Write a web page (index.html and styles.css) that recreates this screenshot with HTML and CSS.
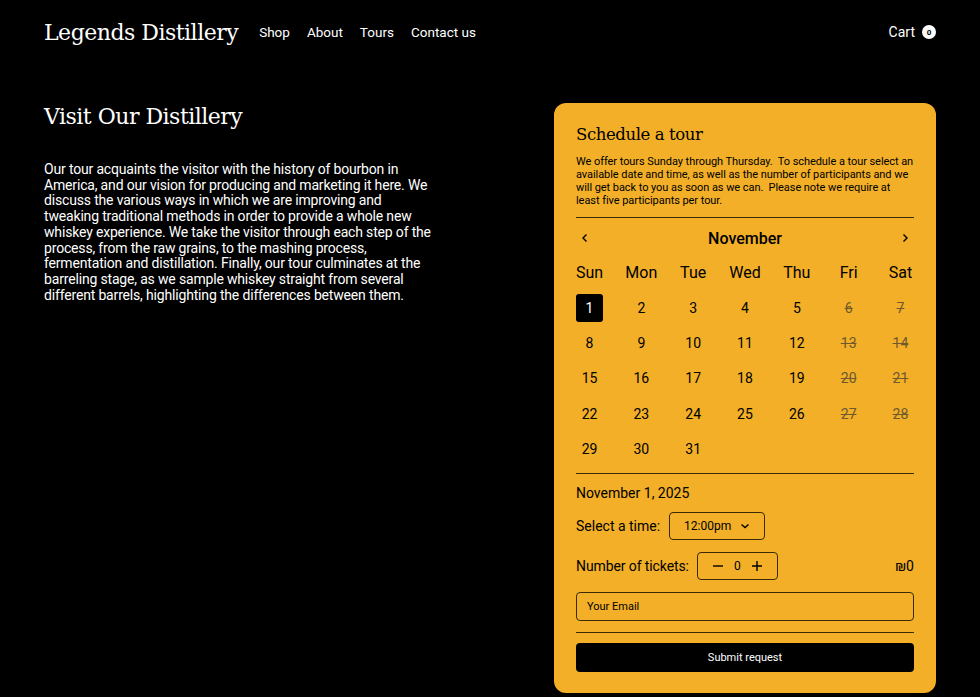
FILE: index.html
```html
<!DOCTYPE html>
<html>
  <head>
    <title>Legends Distillery - Tours</title>
    <link rel="stylesheet" href="styles.css">
  </head>
  <body>
    <header class="site-header">
      <div class="logo">Legends Distillery</div>
      <nav class="main-nav">
        <a href="#">Shop</a>
        <a href="#">About</a>
        <a href="#">Tours</a>
        <a href="#">Contact us</a>
      </nav>
      <a class="cart" href="#">Cart <span class="cart-count">0</span></a>
    </header>

    <main class="page">
      <section class="intro">
        <h1>Visit Our Distillery</h1>
        <p>Our tour acquaints the visitor with the history of bourbon in America, and our vision for producing and marketing it here. We discuss the various ways in which we are improving and tweaking traditional methods in order to provide a whole new whiskey experience. We take the visitor through each step of the process, from the raw grains, to the mashing process, fermentation and distillation. Finally, our tour culminates at the barreling stage, as we sample whiskey straight from several different barrels, highlighting the differences between them.</p>
      </section>

      <section class="booking">
        <h2>Schedule a tour</h2>
        <p class="booking-info">We offer tours Sunday through Thursday.&nbsp; To schedule a tour select an available date and time, as well as the number of participants and we will get back to you as soon as we can.&nbsp; Please note we require at least five participants per tour.</p>
        <hr>

        <div class="cal-head">
          <button class="cal-arrow">
            <svg width="10" height="10" viewBox="0 0 10 10"><path d="M6.5 1.5 3 5l3.5 3.5" fill="none" stroke="#000" stroke-width="1.4"/></svg>
          </button>
          <span class="cal-month">November</span>
          <button class="cal-arrow">
            <svg width="10" height="10" viewBox="0 0 10 10"><path d="M3.5 1.5 7 5 3.5 8.5" fill="none" stroke="#000" stroke-width="1.4"/></svg>
          </button>
        </div>

        <div class="cal-row cal-days">
          <span>Sun</span><span>Mon</span><span>Tue</span><span>Wed</span><span>Thu</span><span>Fri</span><span>Sat</span>
        </div>
        <div class="cal-row">
          <span class="day selected">1</span><span class="day">2</span><span class="day">3</span><span class="day">4</span><span class="day">5</span><span class="day off">6</span><span class="day off">7</span>
        </div>
        <div class="cal-row">
          <span class="day">8</span><span class="day">9</span><span class="day">10</span><span class="day">11</span><span class="day">12</span><span class="day off">13</span><span class="day off">14</span>
        </div>
        <div class="cal-row">
          <span class="day">15</span><span class="day">16</span><span class="day">17</span><span class="day">18</span><span class="day">19</span><span class="day off">20</span><span class="day off">21</span>
        </div>
        <div class="cal-row">
          <span class="day">22</span><span class="day">23</span><span class="day">24</span><span class="day">25</span><span class="day">26</span><span class="day off">27</span><span class="day off">28</span>
        </div>
        <div class="cal-row">
          <span class="day">29</span><span class="day">30</span><span class="day">31</span><span class="day empty"></span><span class="day empty"></span><span class="day empty"></span><span class="day empty"></span>
        </div>
        <hr class="cal-end">

        <div class="picked-date">November 1, 2025</div>

        <div class="field-row">
          <label>Select a time:</label>
          <div class="time-select">12:00pm
            <svg width="10" height="10" viewBox="0 0 10 10"><path d="M1.5 3.5 5 6.5l3.5-3" fill="none" stroke="#000" stroke-width="1.4"/></svg>
          </div>
        </div>

        <div class="field-row">
          <label class="tickets-label">Number of tickets:</label>
          <div class="ticket-count">
            <svg width="12" height="12" viewBox="0 0 12 12"><path d="M1 6h10" stroke="#000" stroke-width="1.4"/></svg>
            <span>0</span>
            <svg width="12" height="12" viewBox="0 0 12 12"><path d="M1 6h10M6 1v10" stroke="#000" stroke-width="1.4"/></svg>
          </div>
          <span class="price">₪0</span>
        </div>

        <input class="email" type="text" placeholder="Your Email">
        <hr class="form-end">
        <button class="submit">Submit request</button>
      </section>
    </main>
  </body>
</html>
```

FILE: styles.css
```css
body{
  margin:0;
  background:#000;
  color:#fff;
  font-family:Roboto, "Liberation Sans", sans-serif;
}
a{
  color:#fff;
  text-decoration:none;
}

/* header */
.site-header{
  display:flex;
  align-items:center;
  height:64px;
  padding:0 44px;
}
.logo{
  font-family:"DejaVu Serif", serif;
  font-size:22px;
  letter-spacing:-0.5px;
  margin-right:21px;
}
.main-nav{
  display:flex;
  gap:17px;
  font-size:13.5px;
}
.cart{
  margin-left:auto;
  display:flex;
  align-items:center;
  font-size:14px;
}
.cart-count{
  display:inline-flex;
  align-items:center;
  justify-content:center;
  width:14px;
  height:14px;
  margin-left:7px;
  border-radius:50%;
  background:#fff;
  color:#000;
  font-size:8px;
  font-weight:700;
}

/* page */
.page{
  display:flex;
  justify-content:space-between;
  align-items:flex-start;
  padding:39px 44px 0;
}
.intro{
  width:390px;
}
.intro h1{
  font-family:"DejaVu Serif", serif;
  font-weight:400;
  font-size:22px;
  letter-spacing:-0.5px;
  line-height:28px;
  margin:0 0 31px;
}
.intro p{
  margin:0;
  font-size:14px;
  letter-spacing:-0.17px;
  line-height:15.7px;
}

/* booking card */
.booking{
  width:338px;
  padding:20px 22px 21px;
  background:#f2af27;
  color:#000;
  border-radius:12px;
}
.booking h2{
  font-family:"DejaVu Serif", serif;
  font-weight:400;
  font-size:16.5px;
  letter-spacing:-0.4px;
  line-height:24px;
  margin:0 0 8px;
}
.booking-info{
  font-size:11px;
  letter-spacing:-0.06px;
  line-height:13px;
  margin:0;
}
.booking hr{
  border:none;
  border-top:1px solid #3a2a08;
  margin:10px 0;
}
.cal-head{
  display:flex;
  align-items:center;
  justify-content:space-between;
  height:20px;
}
.cal-arrow{
  background:none;
  border:none;
  padding:0 4px;
  display:flex;
}
.cal-month{
  font-size:16px;
  font-weight:500;
}
.cal-row{
  display:flex;
  justify-content:space-between;
}
.cal-days{
  margin:15px 0 11px;
  font-size:16px;
  line-height:20px;
}
.cal-days span{
  width:27px;
  display:flex;
  justify-content:center;
}
.day{
  width:27px;
  height:28px;
  display:flex;
  align-items:center;
  justify-content:center;
  font-size:14px;
  border-radius:3px;
  margin-bottom:7.2px;
}
.day.selected{
  background:#000;
  color:#fff;
}
.day.off{
  color:#6e5a2e;
  text-decoration:line-through;
}
.booking hr.cal-end{
  margin:3px 0 10px;
}
.picked-date{
  font-size:14px;
  line-height:18px;
  margin-bottom:10px;
}
.field-row{
  display:flex;
  align-items:center;
  font-size:14px;
  margin-bottom:12px;
}
.field-row label{
  margin-right:9px;
}
.field-row .tickets-label{
  margin-right:8px;
  letter-spacing:-0.1px;
}
.time-select{
  display:flex;
  align-items:center;
  justify-content:center;
  gap:9px;
  width:94px;
  height:26px;
  border:1px solid #3a2a08;
  border-radius:4px;
  font-size:12px;
}
.ticket-count{
  display:flex;
  align-items:center;
  justify-content:center;
  gap:10px;
  width:79px;
  height:26px;
  border:1px solid #3a2a08;
  border-radius:4px;
  font-size:12px;
}
.price{
  margin-left:auto;
}
.email{
  display:block;
  box-sizing:border-box;
  width:100%;
  height:29px;
  padding:0 10px;
  background:transparent;
  border:1px solid #3a2a08;
  border-radius:4px;
  font-family:Roboto, sans-serif;
  font-size:11px;
  outline:none;
}
.email::placeholder{
  color:#000;
}
.booking hr.form-end{
  margin:11px 0 10px;
}
.submit{
  display:block;
  width:100%;
  height:29px;
  background:#000;
  color:#fff;
  border:none;
  border-radius:4px;
  font-family:Roboto, sans-serif;
  font-size:11px;
}
```
